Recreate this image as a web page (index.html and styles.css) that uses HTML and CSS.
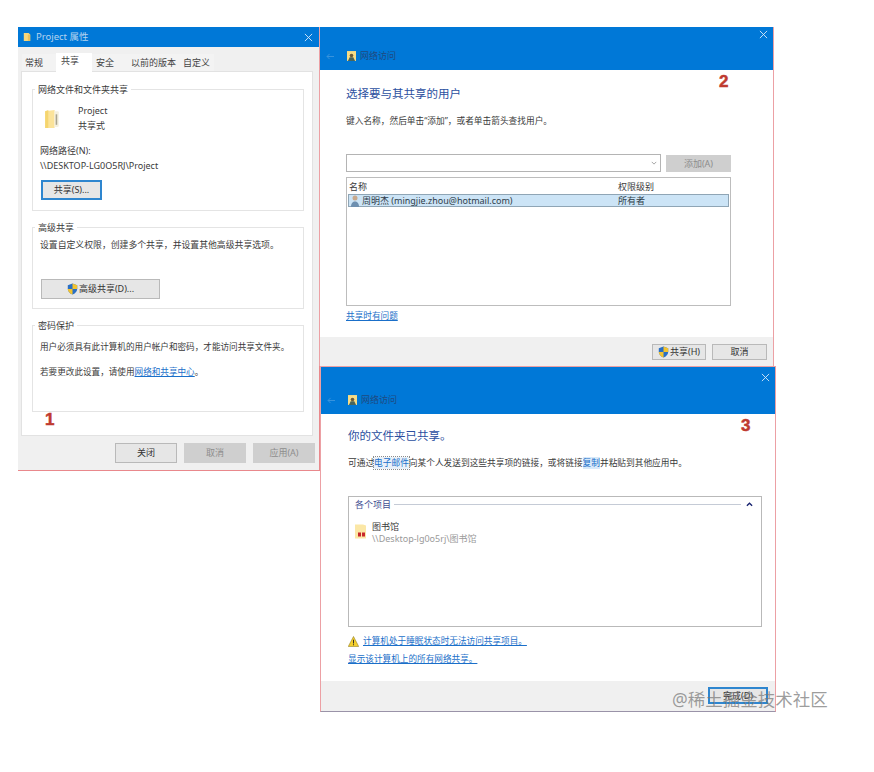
FILE: index.html
```html
<!DOCTYPE html>
<html lang="zh-CN">
<head>
<meta charset="utf-8">
<title>文件夹共享</title>
<link rel="stylesheet" href="styles.css">
</head>
<body>
<div class="desktop">

  <!-- Folder properties dialog -->
  <section class="window props">
    <header class="titlebar">
      <svg class="title-icon" viewBox="0 0 10 12"><path d="M1 1h6l2 2v8H1z" fill="#f6d77c"/><path d="M6 3h3v8H6z" fill="#e9c05b"/></svg>
      <span class="title-text">Project 属性</span>
      <svg class="close" viewBox="0 0 10 10"><path d="M1 1l8 8M9 1l-8 8"/></svg>
    </header>
    <nav class="tabs">
      <span class="tab t-general">常规</span>
      <span class="tab t-share active">共享</span>
      <span class="tab t-safe">安全</span>
      <span class="tab t-prev">以前的版本</span>
      <span class="tab t-custom">自定义</span>
    </nav>
    <div class="panel">
      <div class="group g-share">
        <div class="legend">网络文件和文件夹共享</div>
        <div class="item">
          <svg class="folder" viewBox="0 0 16 20"><path d="M1 3l9-1v17H1z" fill="#fbe39a"/><path d="M10 3h3a1 1 0 0 1 1 1v13a1 1 0 0 1-1 1h-3z" fill="#f4f0df"/><path d="M11 6h1.500v10H11z" fill="#a9a48f"/><path d="M1 3l3-1v17H1z" fill="#f5d56f"/></svg>
          <div class="item-text">
            <div>Project</div>
            <div>共享式</div>
          </div>
        </div>
        <div class="path-label">网络路径(N):</div>
        <div class="path-value">\\DESKTOP-LG0O5RJ\Project</div>
        <button class="btn focus share-btn">共享(S)...</button>
      </div>
      <div class="group g-adv">
        <div class="legend">高级共享</div>
        <p class="adv-text">设置自定义权限，创建多个共享，并设置其他高级共享选项。</p>
        <button class="btn adv-btn">
          <svg class="shield" viewBox="0 0 12 14"><path d="M6 .5l5.500 2v4.500c0 3-2.500 5.300-5.500 6.500C3 12.300.5 10 .5 7V2.500z" fill="#2a6fc4"/><path d="M6 .5l5.500 2V7H6zM6 7v6.500C3 12.300.5 10 .5 7z" fill="#f3c32e"/></svg>高级共享(D)...
        </button>
      </div>
      <div class="group g-pass">
        <div class="legend">密码保护</div>
        <p class="pass-text">用户必须具有此计算机的用户帐户和密码，才能访问共享文件夹。</p>
        <p class="pass-text second">若要更改此设置，请使用<a class="link">网络和共享中心</a>。</p>
      </div>
    </div>
    <footer class="props-footer">
      <button class="btn wide">关闭</button>
      <button class="btn wide off">取消</button>
      <button class="btn wide off">应用(A)</button>
    </footer>
    <span class="mark mark-1">1</span>
  </section>

  <!-- Choose people dialog -->
  <section class="window people">
    <header class="wizard-head head-2">
      <svg class="close close-top" viewBox="0 0 10 10"><path d="M1 1l8 8M9 1l-8 8"/></svg>
      <div class="wizard-row">
        <svg class="back" viewBox="0 0 10 8"><path d="M9 4H1M4 1L1 4l3 3"/></svg>
        <svg class="net-icon" viewBox="0 0 10 11"><path d="M0 0h10v11H0z" fill="#f7dc85"/><circle cx="5" cy="5" r="2" fill="#6b5a3a"/><path d="M1 11l2-4h4l2 4z" fill="#48655c"/></svg>
        <span class="wizard-title">网络访问</span>
      </div>
    </header>
    <div class="wizard-body body-2">
      <h1 class="heading">选择要与其共享的用户</h1>
      <p class="hint hint-2">键入名称，然后单击“添加”，或者单击箭头查找用户。</p>
      <div class="add-row">
        <div class="combo">
          <svg class="chev" viewBox="0 0 8 5"><path d="M1 1l3 3 3-3"/></svg>
        </div>
        <button class="btn off add-btn">添加(A)</button>
      </div>
      <div class="people-list">
        <div class="list-head">
          <span class="col-name">名称</span>
          <span>权限级别</span>
        </div>
        <div class="list-row">
          <span class="col-name user">
            <svg class="user-icon" viewBox="0 0 10 12"><circle cx="5" cy="3" r="2.500" fill="#c9a98c"/><path d="M1 12c0-4 2-5.500 4-5.500s4 1.500 4 5.500z" fill="#6d8fb0"/></svg>周明杰 (mingjie.zhou@hotmail.com)
          </span>
          <span>所有者</span>
        </div>
      </div>
      <a class="link trouble">共享时有问题</a>
    </div>
    <footer class="wizard-footer foot-2">
      <button class="btn small share-final">
        <svg class="shield" viewBox="0 0 12 14"><path d="M6 .5l5.500 2v4.500c0 3-2.500 5.300-5.500 6.500C3 12.300.5 10 .5 7V2.500z" fill="#2a6fc4"/><path d="M6 .5l5.500 2V7H6zM6 7v6.500C3 12.300.5 10 .5 7z" fill="#f3c32e"/></svg>共享(H)
      </button>
      <button class="btn small cancel">取消</button>
    </footer>
    <span class="mark mark-2">2</span>
  </section>

  <!-- Sharing finished dialog -->
  <section class="window done">
    <header class="wizard-head head-3">
      <svg class="close close-top" viewBox="0 0 10 10"><path d="M1 1l8 8M9 1l-8 8"/></svg>
      <div class="wizard-row">
        <svg class="back" viewBox="0 0 10 8"><path d="M9 4H1M4 1L1 4l3 3"/></svg>
        <svg class="net-icon" viewBox="0 0 10 11"><path d="M0 0h10v11H0z" fill="#f7dc85"/><circle cx="5" cy="5" r="2" fill="#6b5a3a"/><path d="M1 11l2-4h4l2 4z" fill="#48655c"/></svg>
        <span class="wizard-title">网络访问</span>
      </div>
    </header>
    <div class="wizard-body body-3">
      <h1 class="heading">你的文件夹已共享。</h1>
      <p class="hint hint-3">可通过<a class="link boxed">电子邮件</a>向某个人发送到这些共享项的链接，或将链接<a class="link tinted">复制</a>并粘贴到其他应用中。</p>
      <div class="items-box">
        <div class="items-head">
          <span class="items-label">各个项目</span>
          <span class="items-rule"></span>
          <svg class="items-chev" viewBox="0 0 8 5"><path d="M1 4l3-3 3 3"/></svg>
        </div>
        <div class="lib-row">
          <svg class="lib-icon" viewBox="0 0 12 16"><path d="M0 1h8l3 1v13H0z" fill="#fbe7a6"/><path d="M3 9h3v4H3zM7 9h3v4H7z" fill="#c8262b"/></svg>
          <div>
            <div class="lib-name">图书馆</div>
            <div class="lib-path">\\Desktop-lg0o5rj\图书馆</div>
          </div>
        </div>
      </div>
      <div class="warn-row">
        <svg class="warn" viewBox="0 0 12 12"><path d="M6 .5L11.700 11.500H.3z" fill="#f4cf2d" stroke="#8a7520" stroke-width=".6"/><path d="M5.500 4h1v4.200h-1zM5.500 9h1v1.200h-1z" fill="#222"/></svg>
        <a class="link">计算机处于睡眠状态时无法访问共享项目。</a>
      </div>
      <a class="link all-shares">显示该计算机上的所有网络共享。</a>
    </div>
    <footer class="wizard-footer foot-3">
      <button class="btn focus finish">完成(D)</button>
    </footer>
    <span class="mark mark-3">3</span>
  </section>

  <div class="watermark">@稀土掘金技术社区</div>
</div>
</body>
</html>
```

FILE: styles.css
```css
* { box-sizing: border-box; }

html, body { margin: 0; background: #fff; }

body {
  font-family: "Noto Sans", "Noto Sans CJK SC", sans-serif;
  font-size: 9px;
  line-height: 14px;
  color: #3a3a3a;
}

p, h1 { margin: 0; }

.desktop {
  position: relative;
  width: 874px;
  height: 772px;
  overflow: hidden;
}

/* Windows sit freely on the desktop */
.window {
  position: absolute;
  display: flex;
  flex-direction: column;
  background: #fff;
}

.props {
  left: 18px; top: 27px;
  width: 302px; height: 444px;
  background: #f0f0f0;
  border-right: 1px solid #e9888c;
  border-bottom: 1px solid #e9888c;
}

.people {
  left: 319px; top: 27px;
  width: 455px; height: 339px;
  border-left: 1px solid #eca0a4;
  border-right: 1px solid #eca0a4;
}

.done {
  left: 320px; top: 366px;
  width: 456px; height: 346px;
  border: 1px solid #eca0a4;
  border-bottom-color: #9a93a8;
}

.mark {
  position: absolute;
  font-family: "Liberation Sans", sans-serif;
  font-size: 17px;
  font-weight: 700;
  line-height: 18px;
  color: #bf3a30;
  -webkit-text-stroke: .5px #bf3a30;
}
.mark-1 { left: 27px; top: 384px; }
.mark-2 { left: 399px; top: 46px; }
.mark-3 { left: 420px; top: 50px; }

/* Title bars */
.titlebar {
  display: flex;
  align-items: center;
  height: 20px;
  flex: none;
  padding: 0 6px 0 5px;
  background: #0078d7;
}
.title-icon { width: 8px; height: 10px; margin-right: 5px; }
.title-text { flex: 1; color: #b4d3ef; font-size: 9.500px; }

.close {
  width: 9px; height: 9px;
  fill: none;
  stroke: #d8e9f8;
  stroke-width: 1;
}

/* Tabs */
.tabs {
  display: flex;
  align-items: flex-end;
  height: 24px;
  flex: none;
  padding-left: 4px;
}
.tab {
  height: 17px;
  line-height: 17px;
  background: #f3f3f3;
  color: #444;
}
.tab.active {
  height: 19px;
  line-height: 16px;
  margin-bottom: -1px;
  background: #fff;
  position: relative;
  z-index: 1;
}
.t-general { width: 34px; padding-left: 3px; }
.t-share { width: 36px; padding-left: 5px; }
.t-safe { width: 33px; padding-left: 4px; }
.t-prev { width: 53px; padding-left: 6px; }
.t-custom { width: 36px; padding-left: 5px; }

.panel {
  width: 292px;
  height: 365px;
  margin-left: 3px;
  padding: 17px 8px 0 10px;
  flex: none;
  background: #fff;
  border: 1px solid #e2e2e2;
  display: flex;
  flex-direction: column;
  gap: 16px;
}

.group {
  border: 1px solid #e4e4e4;
  padding: 0 7px;
  flex: none;
}
.g-share { height: 122px; }
.g-adv { height: 82px; }
.g-pass { height: 87px; }

.legend {
  width: fit-content;
  height: 12px;
  line-height: 12px;
  margin: -6px 0 0 -5px;
  padding: 0 3px;
  background: #fff;
}

.item { display: flex; align-items: center; margin-top: 7px; }
.folder { width: 17px; height: 21px; margin: 0 17px 0 4px; }
.item-text { line-height: 15px; }

.path-label { margin-top: 10px; line-height: 15px; }
.path-value { line-height: 15px; }
.share-btn { width: 61px; height: 20px; margin: 7px 0 0 1px; display: block; }

.adv-text { margin-top: 4px; font-size: 8.850px; }
.adv-btn {
  display: flex;
  align-items: center;
  justify-content: center;
  width: 119px; height: 20px;
  margin: 27px 0 0 1px;
}

.pass-text { margin-top: 8px; font-size: 8.600px; }
.pass-text.second { margin-top: 11px; }

/* Buttons */
.btn {
  padding: 0;
  font: inherit;
  color: #333;
  background: #e6e6e6;
  border: 1px solid #b9b9b9;
}
.btn.focus { border: 2px solid #2e86cf; }
.btn.off { background: #cfcfcf; border-color: #cfcfcf; color: #8d8d8d; }

.shield { width: 11px; height: 12px; flex: none; margin-right: 1px; }

.props-footer {
  display: flex;
  justify-content: flex-end;
  gap: 7px;
  padding: 7px 4px 0;
}
.wide { width: 62px; height: 20px; }

.link { color: #1a6fc9; text-decoration: underline; }

/* Wizard headers */
.wizard-head {
  position: relative;
  flex: none;
  display: flex;
  align-items: flex-end;
  background: #0078d7;
}
.head-2 { height: 43px; padding: 0 0 7px 6px; }
.head-3 { height: 47px; padding: 0 0 7px 6px; }

.close-top { position: absolute; right: 5px; top: 3px; }
.head-3 .close-top { top: 6px; }

.wizard-row { display: flex; align-items: center; }
.back {
  width: 9px; height: 7px;
  margin-right: 12px;
  fill: none;
  stroke: #3f97de;
  stroke-width: 1;
}
.net-icon { width: 9px; height: 10px; margin-right: 4px; }
.wizard-title { color: #1f4a82; }

/* Wizard content */
.wizard-body {
  flex: 1;
  display: flex;
  flex-direction: column;
  align-items: flex-start;
  font-size: 8.650px;
}
.body-2 { padding: 15px 42px 0 26px; }
.body-3 { padding: 13px 13px 0 27px; }

.heading {
  font-size: 11.500px;
  font-weight: 400;
  line-height: 18px;
  color: #2c4fa0;
}

.hint { font-size: 8.700px; }
.hint-2 { margin-top: 11px; }
.hint-3 { margin-top: 11px; }

.boxed { background: #e9f1f9; outline: 1px dotted #8b8b8b; text-decoration: none; }
.tinted { background: #d8e9f9; text-decoration: none; }

.add-row { display: flex; gap: 5px; margin-top: 26px; width: 385px; align-items: flex-end; }
.combo {
  flex: 1;
  height: 18px;
  border: 1px solid #b4b4b4;
  display: flex;
  align-items: center;
  justify-content: flex-end;
  padding-right: 3px;
}
.chev { width: 6px; height: 4px; fill: none; stroke: #888; stroke-width: 1; }
.add-btn { width: 65px; height: 17px; font-size: 9px; }

.people-list {
  width: 385px; height: 129px;
  margin-top: 5px;
  border: 1px solid #bdbdbd;
  font-size: 9px;
}
.list-head, .list-row {
  display: flex;
  align-items: center;
  padding-left: 2px;
}
.list-head { height: 16px; padding-top: 2px; }
.list-row {
  height: 13px;
  margin: 0 1px;
  padding-left: 1px;
  background: #cce4f6;
  border: 1px solid #8fa5b5;
  color: #2f3d49;
}
.col-name { width: 268px; flex: none; }
.list-head .col-name { width: 269px; }
.user { display: flex; align-items: center; }
.user-icon { width: 10px; height: 12px; margin-right: 2px; }

.trouble { margin-top: 3px; }

.wizard-footer {
  flex: none;
  display: flex;
  justify-content: flex-end;
  background: #f0f0f0;
}
.foot-2 { height: 29px; padding: 7px 6px 0 0; gap: 6px; }
.foot-3 { height: 30px; padding: 6px 7px 0 0; }

.small { height: 16px; display: flex; align-items: center; justify-content: center; }
.share-final { width: 54px; }
.cancel { width: 55px; }
.finish { width: 60px; height: 17px; }

.items-box {
  width: 414px; height: 131px;
  margin-top: 26px;
  border: 1px solid #b9b9b9;
  padding: 0 6px;
  font-size: 9px;
}
.items-head { display: flex; align-items: center; height: 15px; }
.items-label { color: #3f4f92; }
.items-rule { flex: 1; height: 1px; margin: 0 3px; background: #c5cbd6; }
.items-chev { width: 7px; height: 5px; margin: 0 2px; fill: none; stroke: #15206e; stroke-width: 1.500; }

.lib-row { display: flex; align-items: flex-start; margin-top: 9px; }
.lib-icon { width: 12px; height: 17px; margin: 2px 5px 0 0; }
.lib-name { line-height: 12px; }
.lib-path { line-height: 12px; color: #9a9a9a; }

.warn-row { display: flex; align-items: center; margin-top: 7px; height: 14px; }
.warn { width: 11px; height: 11px; margin-right: 4px; }
.all-shares { margin-top: 4px; }

.watermark {
  position: absolute;
  left: 672px; top: 687px;
  font-size: 17.500px;
  line-height: 24px;
  color: rgba(120, 120, 120, .72);
}
```
